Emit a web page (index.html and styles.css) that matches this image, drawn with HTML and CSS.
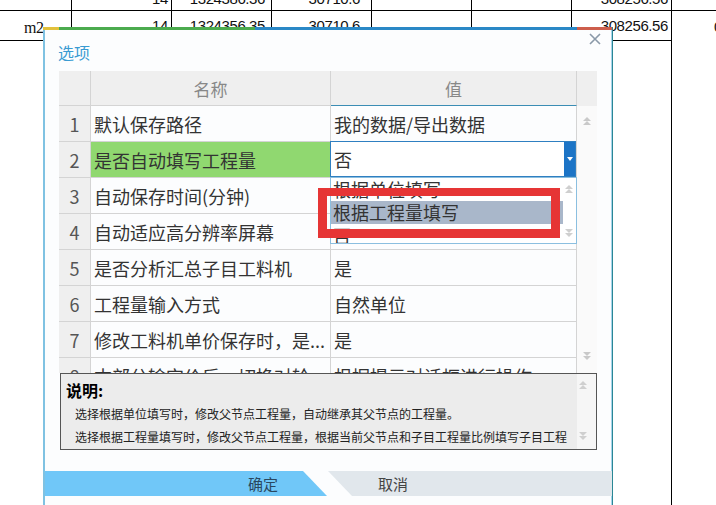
FILE: index.html
```html
<!DOCTYPE html>
<html lang="zh-CN">

<head>
    <meta charset="UTF-8">
    <meta name="viewport" content="width=device-width, initial-scale=1.0">
    <title>选项</title>
    <link rel="stylesheet" href="styles.css">
</head>

<body>
    <!-- 底层工作表 -->
    <div class="sheet">
        <div class="sc"></div>
        <div class="sc r1 num">14</div>
        <div class="sc r1 num p6">1324386.36</div>
        <div class="sc r1 num p11">30710.6</div>
        <div class="sc"></div>
        <div class="sc"></div>
        <div class="sc r1 num">308256.56</div>
        <div class="sc last"></div>

        <div class="sc unit">m2</div>
        <div class="sc num">14</div>
        <div class="sc num p6">1324356.35</div>
        <div class="sc num p11">30710.6</div>
        <div class="sc"></div>
        <div class="sc"></div>
        <div class="sc num">308256.56</div>
        <div class="sc last tall">0</div>

        <div class="sc end"></div>
        <div class="sc end"></div>
        <div class="sc end"></div>
        <div class="sc end"></div>
        <div class="sc end"></div>
        <div class="sc end"></div>
        <div class="sc end"></div>
    </div>

    <!-- 选项对话框 -->
    <div class="dialog">
        <div class="dialog-bar"></div>
        <div class="dialog-title">选项</div>
        <svg class="close" width="12" height="12" viewBox="0 0 12 12">
            <path d="M1 1 L11 11 M11 1 L1 11" stroke="#8a99a8" stroke-width="1.6" fill="none" />
        </svg>

        <div class="grid-view">
            <div class="rows">
                <div class="row head">
                    <div class="cell num"></div>
                    <div class="cell">名称</div>
                    <div class="cell val-head">值</div>
                </div>
                <div class="row">
                    <div class="cell num">1</div>
                    <div class="cell">默认保存路径</div>
                    <div class="cell">我的数据/导出数据</div>
                </div>
                <div class="row">
                    <div class="cell num">2</div>
                    <div class="cell current">是否自动填写工程量</div>
                    <div class="cell edit">
                        <div class="editor">
                            否
                            <span class="drop-btn">
                                <svg width="6" height="4" viewBox="0 0 6 4">
                                    <path d="M0 0 L6 0 L3 4 Z" fill="#fff" />
                                </svg>
                            </span>
                        </div>
                        <div class="droplist">
                            <div class="opt">根据单位填写</div>
                            <div class="opt sel">根据工程量填写</div>
                            <div class="opt">否</div>
                            <svg class="arrow list-up" width="8" height="8" viewBox="0 0 8 8">
                                <path d="M0 4 L4 0 L8 4 Z M0 8 L4 4 L8 8 Z" fill="#cfcfcf" />
                            </svg>
                            <svg class="arrow list-down" width="8" height="8" viewBox="0 0 8 8">
                                <path d="M0 0 L8 0 L4 4 Z M0 4 L8 4 L4 8 Z" fill="#cfcfcf" />
                            </svg>
                        </div>
                    </div>
                </div>
                <div class="row">
                    <div class="cell num">3</div>
                    <div class="cell">自动保存时间(分钟)</div>
                    <div class="cell">10</div>
                </div>
                <div class="row">
                    <div class="cell num">4</div>
                    <div class="cell">自动适应高分辨率屏幕</div>
                    <div class="cell">否</div>
                </div>
                <div class="row">
                    <div class="cell num">5</div>
                    <div class="cell">是否分析汇总子目工料机</div>
                    <div class="cell">是</div>
                </div>
                <div class="row">
                    <div class="cell num">6</div>
                    <div class="cell">工程量输入方式</div>
                    <div class="cell">自然单位</div>
                </div>
                <div class="row">
                    <div class="cell num">7</div>
                    <div class="cell">修改工料机单价保存时，是...</div>
                    <div class="cell">是</div>
                </div>
                <div class="row">
                    <div class="cell num">8</div>
                    <div class="cell">本部分输完价后，切换对轮...</div>
                    <div class="cell">根据提示对话框进行操作</div>
                </div>
            </div>
            <div class="vscroll">
                <svg class="arrow up" width="8" height="8" viewBox="0 0 8 8">
                    <path d="M0 4 L4 0 L8 4 Z M0 8 L4 4 L8 8 Z" fill="#c9c9c9" />
                </svg>
                <svg class="arrow down" width="8" height="8" viewBox="0 0 8 8">
                    <path d="M0 0 L8 0 L4 4 Z M0 4 L8 4 L4 8 Z" fill="#c9c9c9" />
                </svg>
            </div>
        </div>

        <div class="note">
            <div class="note-body">
                <p class="note-title">说明:</p>
                <p>选择根据单位填写时，修改父节点工程量，自动继承其父节点的工程量。</p>
                <p>选择根据工程量填写时，修改父节点工程量，根据当前父节点和子目工程量比例填写子目工程</p>
            </div>
            <div class="note-scroll">
                <svg class="arrow up" width="8" height="8" viewBox="0 0 8 8">
                    <path d="M0 4 L4 0 L8 4 Z M0 8 L4 4 L8 8 Z" fill="#cfcfcf" />
                </svg>
                <svg class="arrow down" width="8" height="8" viewBox="0 0 8 8">
                    <path d="M0 0 L8 0 L4 4 Z M0 4 L8 4 L4 8 Z" fill="#cfcfcf" />
                </svg>
            </div>
        </div>

        <div class="actions">
            <div class="btn ok">确定</div>
            <div class="btn cancel">取消</div>
        </div>

        <!-- 标注框 -->
        <div class="mark"></div>
    </div>
</body>

</html>
```

FILE: styles.css
```css
* {
    padding: 0;
    margin: 0;
    box-sizing: border-box;
}

body {
    width: 716px;
    height: 505px;
    overflow: hidden;
    position: relative;
    background-color: #fff;
    font-family: "Noto Sans CJK SC", sans-serif;
}

/* 工作表 */
.sheet {
    display: grid;
    grid-template-columns: 72px repeat(6, 100px) 1fr;
    grid-template-rows: 30px 30px 480px;
    margin-top: -19px;
    font-family: "Liberation Sans", sans-serif;
    font-size: 15px;
    letter-spacing: -0.4px;
    color: #111;
}

.sc {
    border-right: 1px solid #000;
    border-bottom: 1px solid #000;
    display: flex;
    align-items: center;
    line-height: 17px;
    white-space: nowrap;
}

.sc.r1 {
    align-items: flex-end;
    padding-bottom: 3px;
}

.sc.num {
    justify-content: flex-end;
    padding-right: 3px;
}

.sc.p6 {
    padding-right: 6px;
}

.sc.p11 {
    padding-right: 11px;
}

.sc.unit {
    padding: 4px 0 0 24px;
    font-family: "Liberation Serif", serif;
    font-size: 16px;
}

.sc.last {
    border-right: none;
}

.sc.tall {
    grid-row: span 2;
    border-bottom: none;
    align-items: flex-start;
    padding: 7px 0 0 42px;
}

.sc.end {
    border-bottom: none;
}

/* 对话框 */
.dialog {
    position: absolute;
    left: 43px;
    top: 27px;
    width: 570px;
    height: 490px;
    background-color: #fcfdfe;
    border-left: 2px solid #7fc2e2;
    border-right: 1px solid #2a8795;
    box-shadow: inset -1px 0 0 #a6d4ec;
}

.dialog-bar {
    height: 3px;
    margin-left: -2px;
    background: linear-gradient(to right, #e2c13c 0 16px, #4bab4e 16px 212px, #2a88c6 212px 534px, #cd5e4c 534px);
}

.dialog-title {
    height: 41px;
    padding: 11px 0 0 13px;
    font-size: 16px;
    line-height: 22px;
    color: #3a9bd2;
}

.close {
    position: absolute;
    top: 6px;
    right: 11px;
}

/* 选项表格 */
.grid-view {
    display: flex;
    width: 538px;
    height: 302px;
    margin-left: 14px;
    overflow: hidden;
}

.rows {
    width: 518px;
}

.row {
    display: grid;
    grid-template-columns: 32px 240px 246px;
    height: 36px;
}

.row.head {
    height: 35px;
    background-color: #efefef;
}

.cell {
    display: flex;
    align-items: center;
    padding-left: 3px;
    border-right: 1px solid #d4d4d4;
    border-bottom: 1px solid #d4d4d4;
    font-size: 18px;
    color: #333;
    white-space: nowrap;
    overflow: hidden;
}

.cell.num {
    justify-content: center;
    padding: 0;
    background-color: #efefef;
    color: #555;
}

.head .cell {
    justify-content: center;
    padding: 0;
    font-size: 17px;
    color: #888;
}

.head .val-head {
    border-bottom-color: #3b8db4;
}

.cell.current {
    background-color: #90d870;
}

.cell.edit {
    position: relative;
    overflow: visible;
}

.editor {
    position: absolute;
    top: -1px;
    left: -1px;
    right: 0;
    bottom: 0;
    display: flex;
    align-items: center;
    padding-left: 3px;
    border: 1px solid #2f7fc1;
    background-color: #fff;
}

.drop-btn {
    position: absolute;
    top: 0;
    right: 0;
    bottom: 0;
    width: 11px;
    display: flex;
    align-items: center;
    justify-content: center;
    background-color: #1c74c6;
}

.droplist {
    position: absolute;
    top: 100%;
    left: -1px;
    width: 247px;
    height: 67px;
    z-index: 2;
    overflow: hidden;
    border: 1px solid #8bbfe0;
    background-color: #fff;
}

.opt {
    height: 23px;
    line-height: 23px;
    margin-right: 13px;
    padding-left: 2px;
    font-size: 18px;
    color: #333;
}

.opt.sel {
    background-color: #a9b7ca;
}

.arrow {
    position: absolute;
    display: block;
}

.list-up {
    top: 7px;
    right: 3px;
}

.list-down {
    bottom: 6px;
    right: 3px;
}

.vscroll {
    position: relative;
    width: 20px;
    background: linear-gradient(#efefef 0 35px, #fafafa 35px);
}

.vscroll .up {
    top: 46px;
    left: 6px;
}

.vscroll .down {
    top: 281px;
    left: 6px;
}

/* 说明 */
.note {
    display: flex;
    width: 537px;
    height: 77px;
    margin-left: 15px;
    border: 1px solid #555;
}

.note-body {
    flex: 1;
    padding: 4px 0 0 5px;
    background-color: #ececec;
    font-size: 12px;
    line-height: 23px;
    color: #222;
    white-space: nowrap;
    overflow: hidden;
}

.note-body p {
    padding-left: 9px;
}

.note-body .note-title {
    padding-left: 0;
    font-size: 16px;
    font-weight: bold;
    line-height: 24px;
    color: #000;
}

.note-scroll {
    position: relative;
    width: 19px;
    background-color: #f6f6f6;
}

.note-scroll .up {
    top: 7px;
    left: 2px;
}

.note-scroll .down {
    top: 58px;
    left: 2px;
}

/* 按钮 */
.actions {
    display: flex;
    gap: 1px;
    height: 25px;
    margin-top: 21px;
}

.btn {
    display: flex;
    align-items: center;
    font-size: 15px;
}

.btn.ok {
    width: 282px;
    justify-content: flex-end;
    padding-right: 49px;
    background-color: #70c7f8;
    color: #2a4760;
    clip-path: polygon(0 0, calc(100% - 24px) 0, 100% 100%, 0 100%);
}

.btn.cancel {
    flex: 1;
    padding-left: 50px;
    background-color: #e1e7ec;
    color: #444;
    clip-path: polygon(0 0, 100% 0, 100% 100%, 24px 100%);
}

.mark {
    position: absolute;
    left: 273px;
    top: 161px;
    width: 242px;
    height: 50px;
    z-index: 3;
    border: 9px solid #e63535;
    border-top-width: 8px;
}
```
